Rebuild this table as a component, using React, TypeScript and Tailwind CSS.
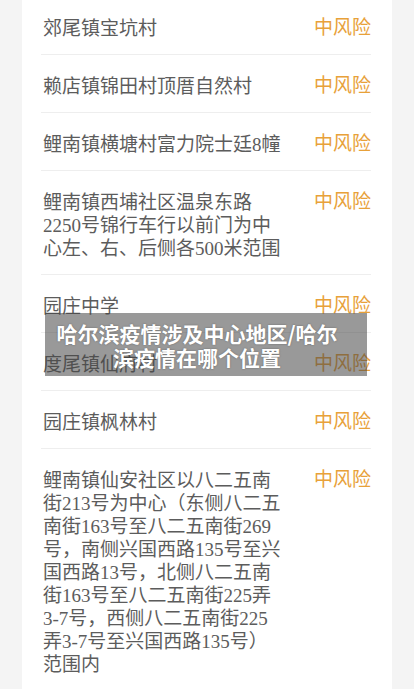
import React from 'react';

const rows: string[] = [
  '郊尾镇宝坑村',
  '赖店镇锦田村顶厝自然村',
  '鲤南镇横塘村富力院士廷8幢',
  '鲤南镇西埔社区温泉东路2250号锦行车行以前门为中心左、右、后侧各500米范围',
  '园庄中学',
  '度尾镇仙府村',
  '园庄镇枫林村',
  '鲤南镇仙安社区以八二五南街213号为中心（东侧八二五南街163号至八二五南街269号，南侧兴国西路135号至兴国西路13号，北侧八二五南街163号至八二五南街225弄3-7号，西侧八二五南街225弄3-7号至兴国西路135号）范围内',
];

export default function App() {
  return (
    <div className="relative min-h-screen overflow-hidden bg-[#f4f4f4]">
      <div className="mx-[22px] min-h-[700px] bg-white px-[19px] pr-[21px]">
        {rows.map((text, i) => (
          <div
            key={i}
            className={
              i === 0
                ? 'flex justify-between border-b border-[#eeeeee] pt-[14px] pb-[17px]'
                : i === rows.length - 1
                  ? 'flex justify-between pt-[17px] pb-[17px]'
                  : 'flex justify-between border-b border-[#eeeeee] pt-[17px] pb-[17px]'
            }
          >
            <p className="mt-[3px] -mb-[3px] w-[243px] pl-[2px] font-['Liberation_Serif','Noto_Sans_CJK_SC',serif] text-[19px] leading-[23px] text-[#5c5c5c]">
              {text}
            </p>
            <span className="shrink-0 font-['Noto_Sans_CJK_SC',sans-serif] text-[19px] leading-[23px] text-[#e8a139]">
              中风险
            </span>
          </div>
        ))}
      </div>

      <div className="absolute left-[45px] top-[313px] w-[322px] bg-[rgba(70,70,70,0.55)] pt-[8px] pb-[7px] pl-[11px] pr-[29px] text-center font-['Noto_Sans_CJK_SC',sans-serif] text-[21px] font-bold leading-[24px] text-white [text-shadow:0_0_2px_rgba(0,0,0,0.35)]">
        <span className="block whitespace-nowrap">哈尔滨疫情涉及中心地区/哈尔</span>
        <span className="block whitespace-nowrap">滨疫情在哪个位置</span>
      </div>
    </div>
  );
}
